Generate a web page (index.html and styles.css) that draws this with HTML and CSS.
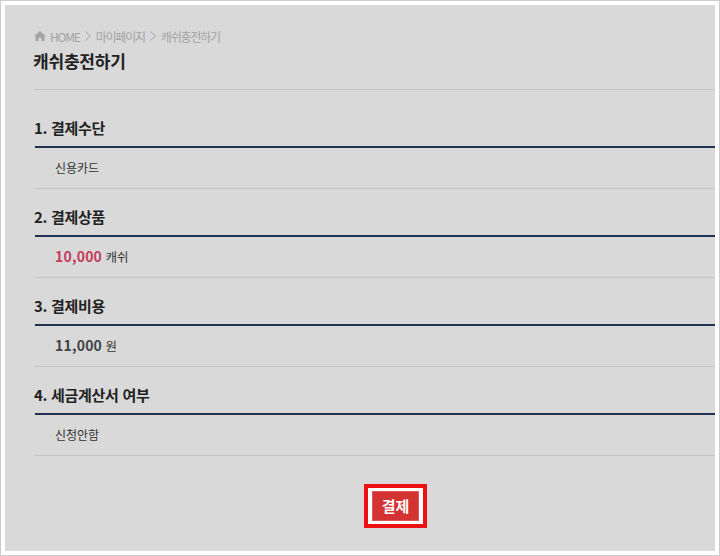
FILE: index.html
```html
<!DOCTYPE html>
<html lang="ko">
<head>
    <meta charset="UTF-8">
    <meta name="viewport" content="width=device-width, initial-scale=1.0">
    <title>캐쉬충전하기</title>
    <link rel="stylesheet" href="styles.css">
</head>
<body>

<div class="frame">
    <div class="content">
        <div class="crumbs">
            <svg class="home-icon" width="12" height="10" viewBox="0 0 12 10"><path d="M6 0L0 5.2h1.600V10h3V6.800h2.800V10h3V5.200H12z"/></svg>
            <span>HOME</span>
            <svg class="sep" width="6" height="10" viewBox="0 0 6 10"><path d="M0.500 0.500L5.300 5L0.500 9.500"/></svg>
            <span>마이페이지</span>
            <svg class="sep" width="6" height="10" viewBox="0 0 6 10"><path d="M0.500 0.500L5.300 5L0.500 9.500"/></svg>
            <span>캐쉬충전하기</span>
        </div>
        <h1>캐쉬충전하기</h1>

        <section class="block">
            <h2>1. 결제수단</h2>
            <div class="row">신용카드</div>
        </section>
        <section class="block">
            <h2>2. 결제상품</h2>
            <div class="row"><b class="price">10,000</b> <span class="unit">캐쉬</span></div>
        </section>
        <section class="block">
            <h2>3. 결제비용</h2>
            <div class="row"><b class="cost">11,000</b> <span class="unit">원</span></div>
        </section>
        <section class="block">
            <h2>4. 세금계산서 여부</h2>
            <div class="row">신청안함</div>
        </section>

        <div class="actions">
            <div class="pay-frame">
                <button type="button">결제</button>
            </div>
        </div>
    </div>
</div>

</body>
</html>
```

FILE: styles.css
```css
html, body {
    margin: 0;
    height: 100%;
}
body {
    background: #fff;
    font-family: "Noto Sans CJK KR", "Noto Sans", sans-serif;
    color: #333;
}
.frame {
    box-sizing: border-box;
    height: 556px;
    border: 1px solid #ccc;
    padding: 4px;
}
.content {
    height: 100%;
    box-sizing: border-box;
    background: #d9d9d9;
    padding: 21px 0 0 29px;
}
.crumbs {
    display: flex;
    align-items: center;
    gap: 4px;
    height: 20px;
    font-size: 12px;
    letter-spacing: -1.2px;
    color: #a3a3a3;
}
.home-icon {
    fill: #a3a3a3;
}
.sep {
    fill: none;
    stroke: #a3a3a3;
    stroke-width: 1;
    margin: 0 1px;
}
h1 {
    margin: 3px 0 10px;
    height: 40px;
    border-bottom: 1px solid #c4c4c4;
    font-size: 17px;
    line-height: 24px;
    font-weight: 700;
    letter-spacing: -0.2px;
    text-indent: -1px;
    color: #222;
}
.block {
    margin-left: 1px;
}
h2 {
    margin: 0;
    padding-top: 16px;
    height: 30px;
    border-bottom: 2px solid #1f3350;
    font-size: 15px;
    line-height: 24px;
    font-weight: 700;
    letter-spacing: -0.3px;
    text-indent: -1px;
    color: #222;
}
.row {
    height: 40px;
    padding-left: 20px;
    border-bottom: 1px solid #c4c4c4;
    font-size: 12px;
    line-height: 39px;
    color: #333;
}
.price, .cost {
    font-size: 14px;
    font-weight: 700;
    letter-spacing: 0.2px;
}
.price {
    color: #c43c5c;
}
.cost {
    color: #444;
}
.unit {
    font-size: 12.500px;
}
.actions {
    display: flex;
    justify-content: center;
    padding: 28px 0 0 42px;
}
.pay-frame {
    border: 4px solid #ee1111;
    padding: 3px 4px;
    background: #fff;
}
button {
    display: block;
    box-sizing: border-box;
    width: 47px;
    height: 30px;
    padding: 0 0 2px;
    background: #d43333;
    border: 1px solid #e05555;
    font-family: inherit;
    font-size: 15px;
    font-weight: 700;
    color: #fff;
}
```
